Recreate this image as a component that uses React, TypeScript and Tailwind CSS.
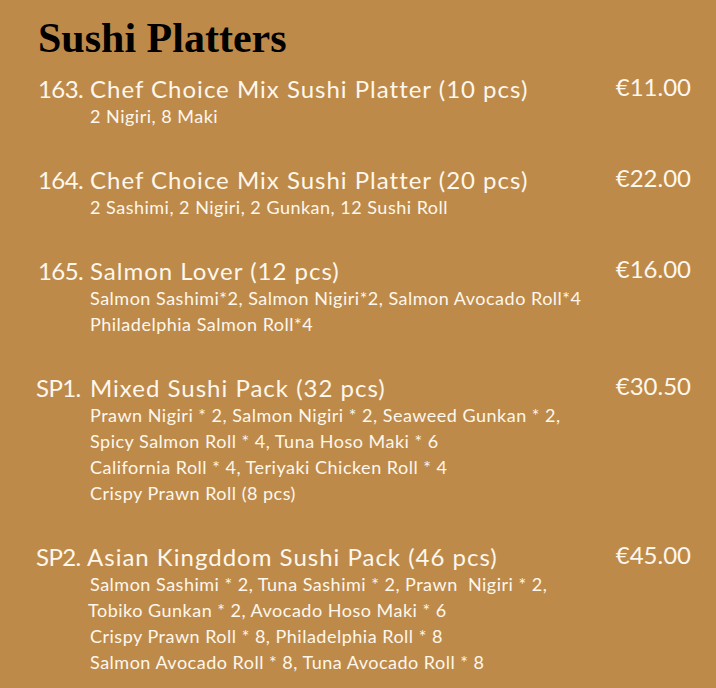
import React from "react";

type Item = {
    num: string;
    numCls: string;
    name: string;
    price: string;
    lines: string[];
    pads?: string[];
};

const items: Item[] = [
    {
        num: "163.",
        numCls: "w-[52px]",
        name: "Chef Choice Mix Sushi Platter (10 pcs)",
        price: "€11.00",
        lines: ["2 Nigiri, 8 Maki"],
    },
    {
        num: "164.",
        numCls: "w-[52px]",
        name: "Chef Choice Mix Sushi Platter (20 pcs)",
        price: "€22.00",
        lines: ["2 Sashimi, 2 Nigiri, 2 Gunkan, 12 Sushi Roll"],
    },
    {
        num: "165.",
        numCls: "w-[52px]",
        name: "Salmon Lover (12 pcs)",
        price: "€16.00",
        lines: [
            "Salmon Sashimi*2, Salmon Nigiri*2, Salmon Avocado Roll*4",
            "Philadelphia Salmon Roll*4",
        ],
    },
    {
        num: "SP1.",
        numCls: "w-[54px] -ml-[2px]",
        name: "Mixed Sushi Pack (32 pcs)",
        price: "€30.50",
        lines: [
            "Prawn Nigiri * 2, Salmon Nigiri * 2, Seaweed Gunkan * 2,",
            "Spicy Salmon Roll * 4, Tuna Hoso Maki * 6",
            "California Roll * 4, Teriyaki Chicken Roll * 4",
            "Crispy Prawn Roll (8 pcs)",
        ],
    },
    {
        num: "SP2.",
        numCls: "w-[51px] -ml-[2px]",
        name: "Asian Kingddom Sushi Pack (46 pcs)",
        price: "€45.00",
        lines: [
            "Salmon Sashimi * 2, Tuna Sashimi * 2, Prawn  Nigiri * 2,",
            "Tobiko Gunkan * 2, Avocado Hoso Maki * 6",
            "Crispy Prawn Roll * 8, Philadelphia Roll * 8",
            "Salmon Avocado Roll * 8, Tuna Avocado Roll * 8",
        ],
        pads: ["pl-[3px]", "pl-[1px]", "pl-[3px]", "pl-[3px]"],
    },
];

export default function App() {
    return (
        <div className="w-[716px] h-[688px] overflow-hidden bg-[#be8a4a] pl-[38px] pr-[25px] pt-[14px] text-[#fdf7ec] font-['Lato','Open_Sans',sans-serif]">
            <h1 className="text-[42px] leading-[48px] font-bold text-black font-['Liberation_Serif','DejaVu_Serif',serif]">
                Sushi Platters
            </h1>

            <div className="mt-[13px] flex flex-col gap-[37px]">
                {items.map((item) => (
                    <div key={item.num} className="flex">
                        <div className={`${item.numCls} shrink-0 text-[24px] leading-[28px] tracking-[-0.6px] whitespace-nowrap`}>
                            {item.num}
                        </div>
                        <div className="flex-1">
                            <div className="text-[24px] leading-[28px] tracking-[1px] whitespace-nowrap">
                                {item.name}
                            </div>
                            {item.lines.map((line, i) => (
                                <div
                                    key={i}
                                    className={`text-[18px] leading-[26px] tracking-[0.5px] whitespace-pre ${item.pads ? item.pads[i] : ""}`}
                                >
                                    {line}
                                </div>
                            ))}
                        </div>
                        <div className="shrink-0 text-[24px] leading-[24px]">{item.price}</div>
                    </div>
                ))}
            </div>
        </div>
    );
}
